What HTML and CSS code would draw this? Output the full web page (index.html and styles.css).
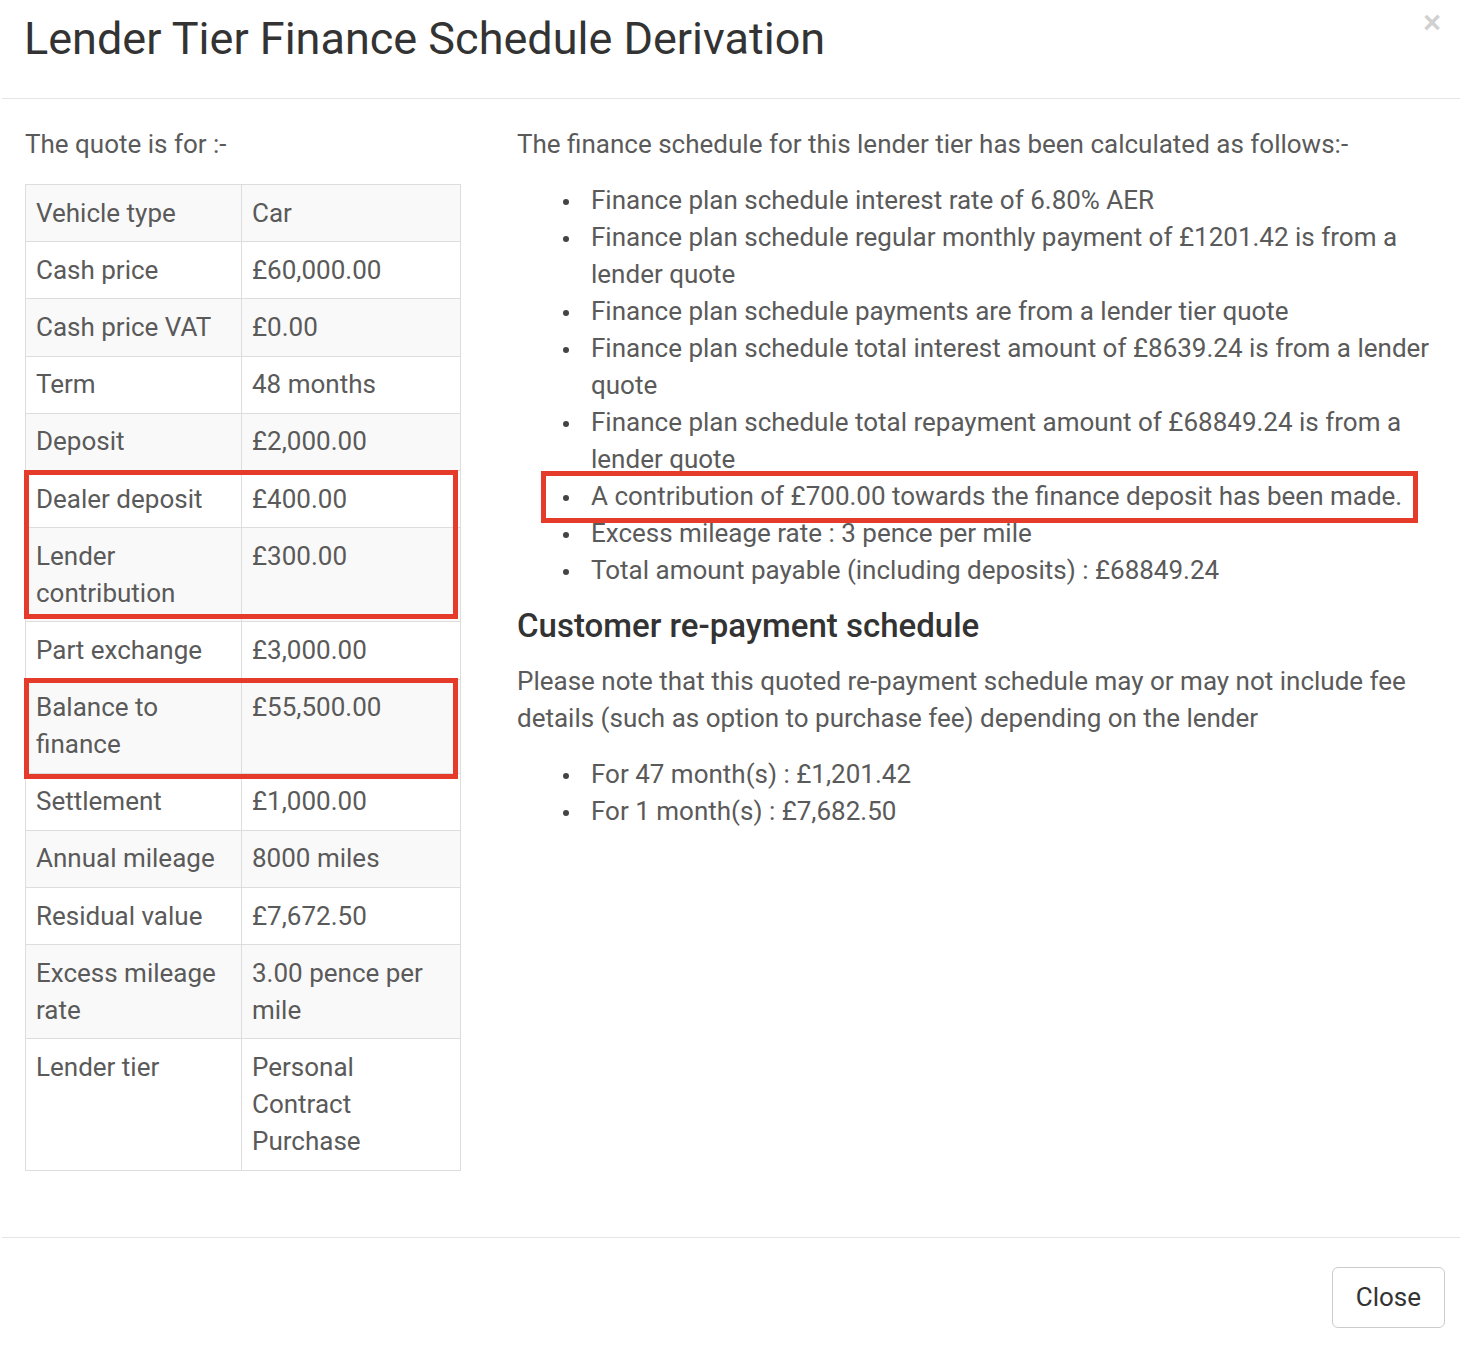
FILE: index.html
```html
<!DOCTYPE html>
<html lang="en">
<head>
<meta charset="utf-8">
<title>Lender Tier Finance Schedule Derivation</title>
<link rel="stylesheet" href="styles.css">
</head>
<body>
<div class="modal">
  <div class="modal-header">
    <h3 class="modal-title">Lender Tier Finance Schedule Derivation</h3>
    <span class="close">×</span>
  </div>
  <div class="modal-body">
    <div class="col-left">
      <p class="intro-left">The quote is for :-</p>
      <table class="quote-table">
        <colgroup><col class="c1"><col class="c2"></colgroup>
        <tbody>
          <tr><td>Vehicle type</td><td>Car</td></tr>
          <tr><td>Cash price</td><td>£60,000.00</td></tr>
          <tr><td>Cash price VAT</td><td>£0.00</td></tr>
          <tr><td>Term</td><td>48 months</td></tr>
          <tr><td>Deposit</td><td>£2,000.00</td></tr>
          <tr><td>Dealer deposit</td><td>£400.00</td></tr>
          <tr><td>Lender contribution</td><td>£300.00</td></tr>
          <tr><td>Part exchange</td><td>£3,000.00</td></tr>
          <tr><td>Balance to finance</td><td>£55,500.00</td></tr>
          <tr><td>Settlement</td><td>£1,000.00</td></tr>
          <tr><td>Annual mileage</td><td>8000 miles</td></tr>
          <tr><td>Residual value</td><td>£7,672.50</td></tr>
          <tr><td>Excess mileage rate</td><td>3.00 pence per mile</td></tr>
          <tr><td>Lender tier</td><td>Personal Contract Purchase</td></tr>
        </tbody>
      </table>
    </div>
    <div class="col-right">
      <p class="intro-right">The finance schedule for this lender tier has been calculated as follows:-</p>
      <ul class="list">
        <li>Finance plan schedule interest rate of 6.80% AER</li>
        <li>Finance plan schedule regular monthly payment of £1201.42 is from a lender quote</li>
        <li>Finance plan schedule payments are from a lender tier quote</li>
        <li>Finance plan schedule total interest amount of £8639.24 is from a lender quote</li>
        <li>Finance plan schedule total repayment amount of £68849.24 is from a lender quote</li>
        <li>A contribution of £700.00 towards the finance deposit has been made.</li>
        <li>Excess mileage rate : 3 pence per mile</li>
        <li>Total amount payable (including deposits) : £68849.24</li>
      </ul>
      <h4 class="sub-title">Customer re-payment schedule</h4>
      <p class="note">Please note that this quoted re-payment schedule may or may not include fee details (such as option to purchase fee) depending on the lender</p>
      <ul class="list">
        <li>For 47 month(s) : £1,201.42</li>
        <li>For 1 month(s) : £7,682.50</li>
      </ul>
    </div>
  </div>
  <div class="modal-footer">
    <button class="btn" type="button">Close</button>
  </div>
  <div class="mark mark-1"></div>
  <div class="mark mark-2"></div>
  <div class="mark mark-3"></div>
</div>
</body>
</html>
```

FILE: styles.css
```css
html, body {
  margin: 0;
  padding: 0;
  background: #fff;
}

body {
  font-family: Roboto, "Liberation Sans", Arial, sans-serif;
  font-size: 26px;
  line-height: 37px;
  color: #5a5a5a;
}

.modal {
  position: relative;
  margin: 0 2px;
}

.modal-header {
  display: flex;
  justify-content: space-between;
  align-items: flex-start;
  padding: 14px 18px 35px 22px;
  border-bottom: 1px solid #e5e5e5;
}

.modal-title {
  margin: 0;
  font-size: 45px;
  line-height: 49px;
  font-weight: 400;
  color: #333;
}

.close {
  font-family: "Liberation Sans", Arial, sans-serif;
  font-size: 31px;
  font-weight: 700;
  line-height: 1;
  color: #000;
  opacity: 0.18;
  margin-top: -7px;
  margin-right: 1px;
}

.modal-body {
  display: grid;
  grid-template-columns: 435px 1fr;
  column-gap: 57px;
  padding: 27px 16px 29px 23px;
}

.intro-left {
  margin: 0 0 21px;
}

.intro-right {
  margin: 0 0 18.5px;
}

.quote-table {
  width: 435px;
  border-collapse: collapse;
  table-layout: fixed;
  margin-bottom: 37px;
}

.quote-table .c1 { width: 216px; }
.quote-table .c2 { width: 219px; }

.quote-table td {
  border: 1px solid #ddd;
  padding: 9.6px 10px;
  vertical-align: top;
}

.quote-table tr:nth-child(odd) td {
  background: #f9f9f9;
}

.list {
  margin: 0;
  padding-left: 74px;
  list-style: none;
}

.list li::before {
  content: "";
  display: inline-block;
  width: 6px;
  height: 6px;
  border-radius: 50%;
  background: #444;
  margin-left: -28px;
  margin-right: 22px;
  vertical-align: middle;
}

.sub-title {
  margin: 19px 0 19px;
  font-size: 33px;
  line-height: 36px;
  font-weight: 500;
  color: #333;
}

.note {
  margin: 0 0 19px;
}

.modal-footer {
  display: flex;
  justify-content: flex-end;
  padding: 29px 15px 22px;
  border-top: 1px solid #e5e5e5;
}

.btn {
  font-family: Roboto, "Liberation Sans", Arial, sans-serif;
  font-size: 26px;
  line-height: 37px;
  color: #333;
  background: #fff;
  border: 1px solid #ccc;
  border-radius: 6px;
  padding: 11px 23px;
}

.mark {
  position: absolute;
  border: 5px solid #e53b2a;
  box-sizing: border-box;
}

.mark-1 { left: 22px; top: 470px; width: 434px; height: 149px; }
.mark-2 { left: 22px; top: 678px; width: 434px; height: 101px; }
.mark-3 { left: 539px; top: 471px; width: 877px; height: 52px; }
```
